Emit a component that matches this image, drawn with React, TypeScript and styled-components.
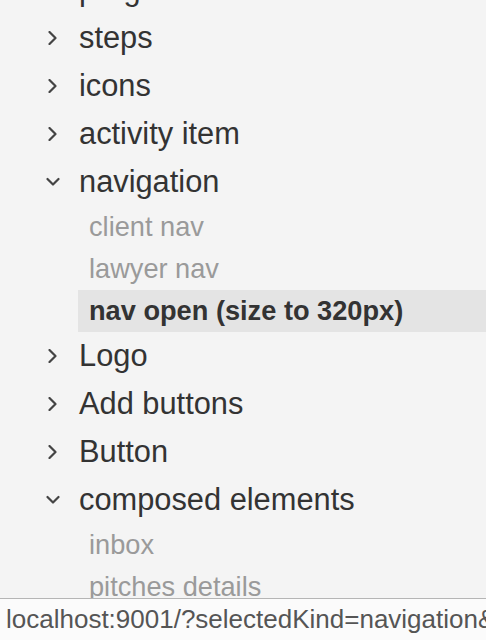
import React from "react";
import styled, { createGlobalStyle } from "styled-components";

const GlobalStyle = createGlobalStyle`
  html, body {
    margin: 0;
    padding: 0;
    background: #f4f4f4;
    overflow: hidden;
  }
  body {
    font-family: "Liberation Sans", Arial, sans-serif;
  }
`;

// 왼쪽 스토리 목록
const Page = styled.div`
  width: 486px;
  height: 640px;
  overflow: hidden;
  background: #f4f4f4;
`;

const KindList = styled.ul`
  list-style: none;
  margin: -34px 0 0 0;
  padding: 0;
`;

const KindRow = styled.li`
  display: flex;
  align-items: center;
  height: 48px;
  padding-left: 46px;
  gap: 19px;
  color: #333;
  font-size: 30.8px;
  white-space: nowrap;
`;

const Arrow = styled.svg`
  width: 14px;
  height: 14px;
  flex: none;
`;

const StoryList = styled.ul`
  list-style: none;
  margin: 0;
  padding: 0 0 0 78px;
`;

const StoryRow = styled.li<{ selected?: boolean }>`
  display: flex;
  align-items: center;
  height: 42px;
  padding-left: 11px;
  font-size: 27.2px;
  white-space: nowrap;
  color: ${(p) => (p.selected ? "#333" : "#9a9a9a")};
  font-weight: ${(p) => (p.selected ? 700 : 400)};
  background: ${(p) => (p.selected ? "#e4e4e4" : "transparent")};
`;

// 브라우저 하단 상태표시줄
const StatusBar = styled.div`
  position: fixed;
  left: 0;
  right: 0;
  bottom: 0;
  height: 41px;
  border-top: 1px solid #b5b5b5;
  background: #fbfbfb;
  color: #555;
  font-size: 26px;
  display: flex;
  align-items: center;
  padding-left: 6px;
  white-space: nowrap;
  overflow: hidden;
`;

interface Kind {
  name: string;
  open?: boolean;
  stories?: string[];
}

const kinds: Kind[] = [
  { name: "progress" },
  { name: "steps" },
  { name: "icons" },
  { name: "activity item" },
  {
    name: "navigation",
    open: true,
    stories: ["client nav", "lawyer nav", "nav open (size to 320px)"],
  },
  { name: "Logo" },
  { name: "Add buttons" },
  { name: "Button" },
  {
    name: "composed elements",
    open: true,
    stories: ["inbox", "pitches details", "pitches list"],
  },
];

const Chevron: React.FC<{ open?: boolean }> = ({ open }) => (
  <Arrow viewBox="0 0 14 14" fill="none" stroke="#444" strokeWidth="2.2" strokeLinecap="round" strokeLinejoin="round">
    {open ? <polyline points="1.5,4 7,9.5 12.5,4" /> : <polyline points="3.5,1 9.5,7 3.5,13" />}
  </Arrow>
);

const App: React.FC = () => {
  return (
    <Page>
      <GlobalStyle />
      <KindList>
        {kinds.map((kind) => (
          <React.Fragment key={kind.name}>
            <KindRow>
              <Chevron open={kind.open} />
              <span>{kind.name}</span>
            </KindRow>
            {kind.open && kind.stories && (
              <StoryList>
                {kind.stories.map((story) => (
                  <StoryRow key={story} selected={story === "nav open (size to 320px)"}>
                    {story}
                  </StoryRow>
                ))}
              </StoryList>
            )}
          </React.Fragment>
        ))}
      </KindList>
      <StatusBar>localhost:9001/?selectedKind=navigation&amp;</StatusBar>
    </Page>
  );
};

export default App;
